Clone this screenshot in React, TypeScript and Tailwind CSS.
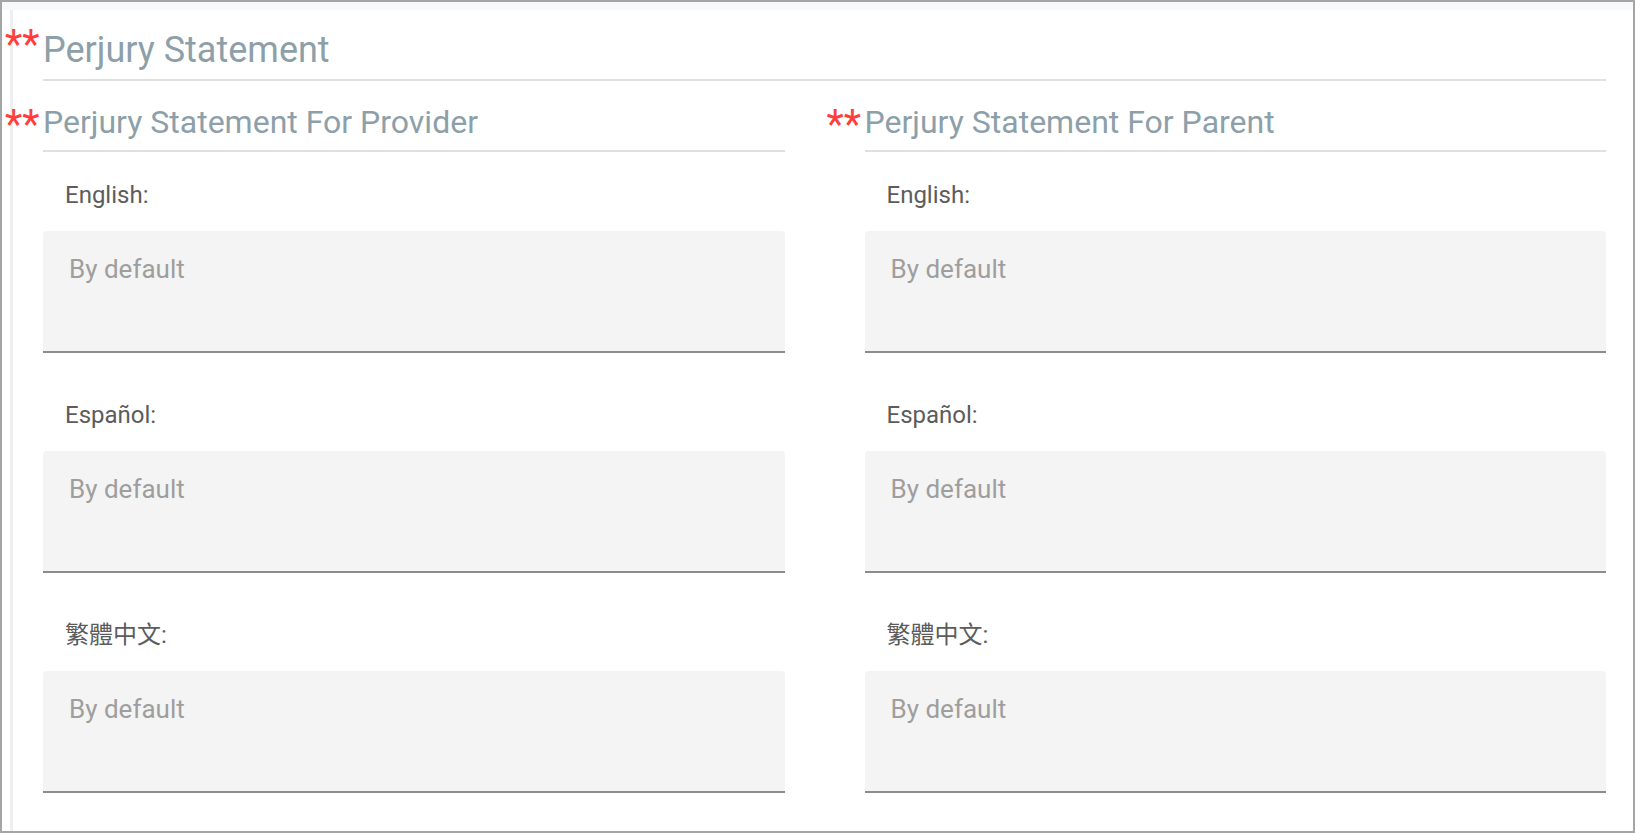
const font = { fontFamily: "Roboto, 'Noto Sans CJK TC', sans-serif" };

function Star({ className }: { className: string }) {
  return (
    <span className={`-ml-[38px] w-[38px] shrink-0 text-[40px] leading-[40px] text-[#ff3d3d] ${className}`}>
      **
    </span>
  );
}

function Heading({ title, big, starTop }: { title: string; big?: boolean; starTop: string }) {
  return (
    <div className="flex items-start">
      <Star className={starTop} />
      <h2
        className={
          big
            ? "flex-1 border-b-2 border-[#e0e0e0] pb-[7px] text-[36px] leading-[44px] font-normal text-[#8d9fa9]"
            : "flex-1 border-b-2 border-[#e0e0e0] pb-[8px] text-[32px] leading-[40px] font-normal text-[#8d9fa9]"
        }
      >
        {title}
      </h2>
    </div>
  );
}

function Field({ label, first }: { label: string; first?: boolean }) {
  return (
    <div className={first ? "mt-[29px]" : "mt-[48px]"}>
      <div className="pl-[22px] text-[24px] leading-[28px] text-[#5c5c5c]">{label}</div>
      <div className="mt-[22px] h-[122px] rounded-t-[4px] border-b-2 border-[#8c8c8c] bg-[#f4f4f4] pl-[26px] pt-[23px]">
        <span className="text-[26px] leading-[30px] text-[#9e9e9e]">By default</span>
      </div>
    </div>
  );
}

function Column({ title }: { title: string }) {
  return (
    <div>
      <Heading title={title} starTop="mt-[3px]" />
      <Field label="English:" first />
      <Field label="Español:" />
      <Field label="繁體中文:" />
    </div>
  );
}

export default function App() {
  return (
    <div
      style={font}
      className="flex h-[833px] w-[1635px] flex-col overflow-hidden border-2 border-[#a5a5a5] bg-white"
    >
      <div className="h-[8px] shrink-0 bg-[#f8f9fb]" />
      <div className="flex flex-1 pl-[8px]">
        <div className="w-[3px] shrink-0 bg-[#efefef]" />
        <div className="flex-1 pl-[30px] pr-[27px] pt-[18px]">
          <Heading title="Perjury Statement" big starTop="-mt-[3px]" />
          <div className="mt-[21px] grid grid-cols-2 gap-x-[80px]">
            <Column title="Perjury Statement For Provider" />
            <Column title="Perjury Statement For Parent" />
          </div>
        </div>
      </div>
    </div>
  );
}
